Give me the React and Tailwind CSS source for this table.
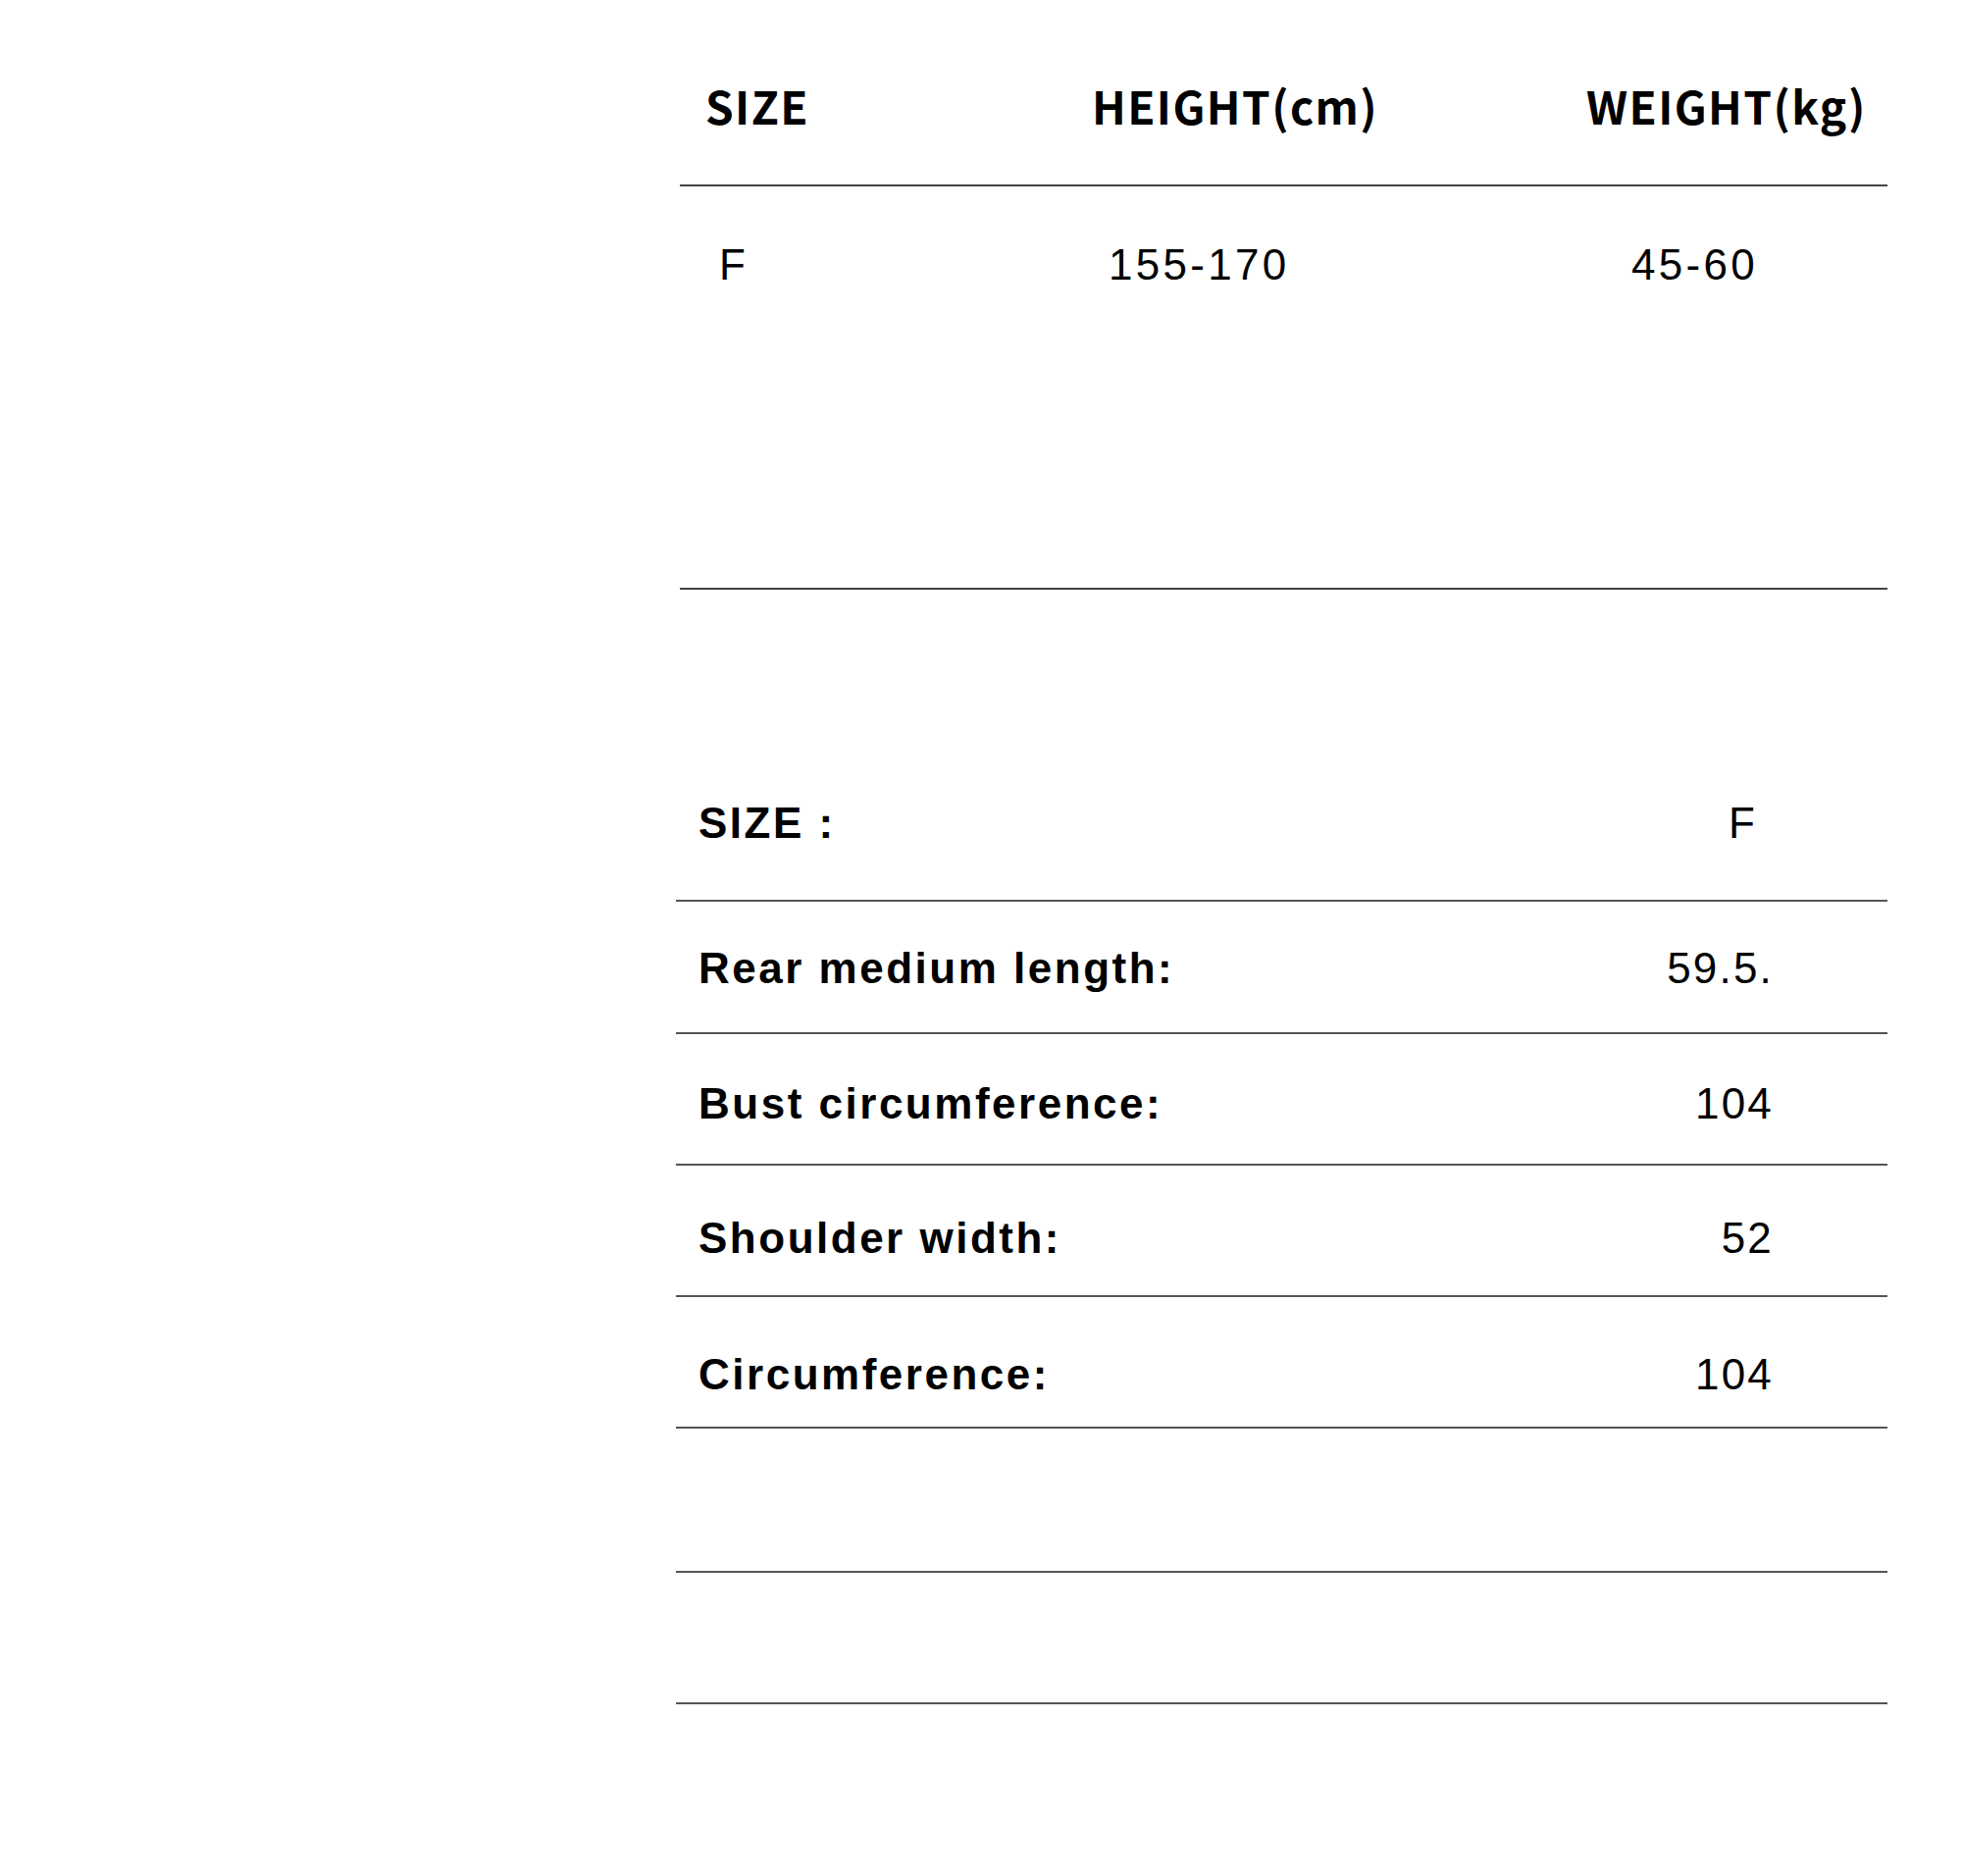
import React from 'react';

const head = { fontFamily: '"Noto Sans CJK SC", "Noto Sans", sans-serif' };
const arial = { fontFamily: '"Liberation Sans", Arial, sans-serif' };

const rows = [
  { label: 'SIZE :', value: 'F', h: 'h-[134px]', pt: 'pt-[32px]', pr: 'pr-[133px]' },
  { label: 'Rear medium length:', value: '59.5.', h: 'h-[135px]', pt: 'pt-[46px]', pr: 'pr-[116px]' },
  { label: 'Bust circumference:', value: '104', h: 'h-[134px]', pt: 'pt-[49px]', pr: 'pr-[116px]' },
  { label: 'Shoulder width:', value: '52', h: 'h-[134px]', pt: 'pt-[52px]', pr: 'pr-[116px]' },
  { label: 'Circumference:', value: '104', h: 'h-[134px]', pt: 'pt-[57px]', pr: 'pr-[116px]' },
  { label: '', value: '', h: 'h-[147px]', pt: 'pt-[57px]', pr: 'pr-[116px]' },
  { label: '', value: '', h: 'h-[134px]', pt: 'pt-[57px]', pr: 'pr-[116px]' },
];

const App = () => {
  return (
    <div className="min-h-[1912px] w-[2000px] bg-white text-black">
      <div className="ml-[689px] w-[1235px]">
        {/* size guide */}
        <div className="ml-[4px] w-[1231px]" style={arial}>
          <div
            className="grid grid-cols-[420px_504px_1fr] h-[190px] border-b-2 border-[#444] pt-[84px] text-[46px] font-bold leading-none tracking-[0.03em]"
            style={head}
          >
            <div className="pl-[26px]">SIZE</div>
            <div>HEIGHT(cm)</div>
            <div>WEIGHT(kg)</div>
          </div>
          <div className="grid grid-cols-[420px_504px_1fr] h-[411px] border-b-2 border-[#444] pt-[58px] text-[44px] leading-none tracking-[0.075em]">
            <div className="pl-[40px]">F</div>
            <div className="pl-[17px]">155-170</div>
            <div className="pl-[46px]">45-60</div>
          </div>
        </div>

        {/* measurements */}
        <div className="mt-[184px]" style={arial}>
          {rows.map((r, i) => (
            <div
              key={i}
              className={`flex justify-between border-b-2 border-[#555] text-[44px] leading-none ${r.h} ${r.pt}`}
            >
              <div className="pl-[23px] font-bold tracking-[0.057em]">{r.label}</div>
              <div className={`tracking-[0.05em] ${r.pr}`}>{r.value}</div>
            </div>
          ))}
        </div>
      </div>
    </div>
  );
};

export default App;
